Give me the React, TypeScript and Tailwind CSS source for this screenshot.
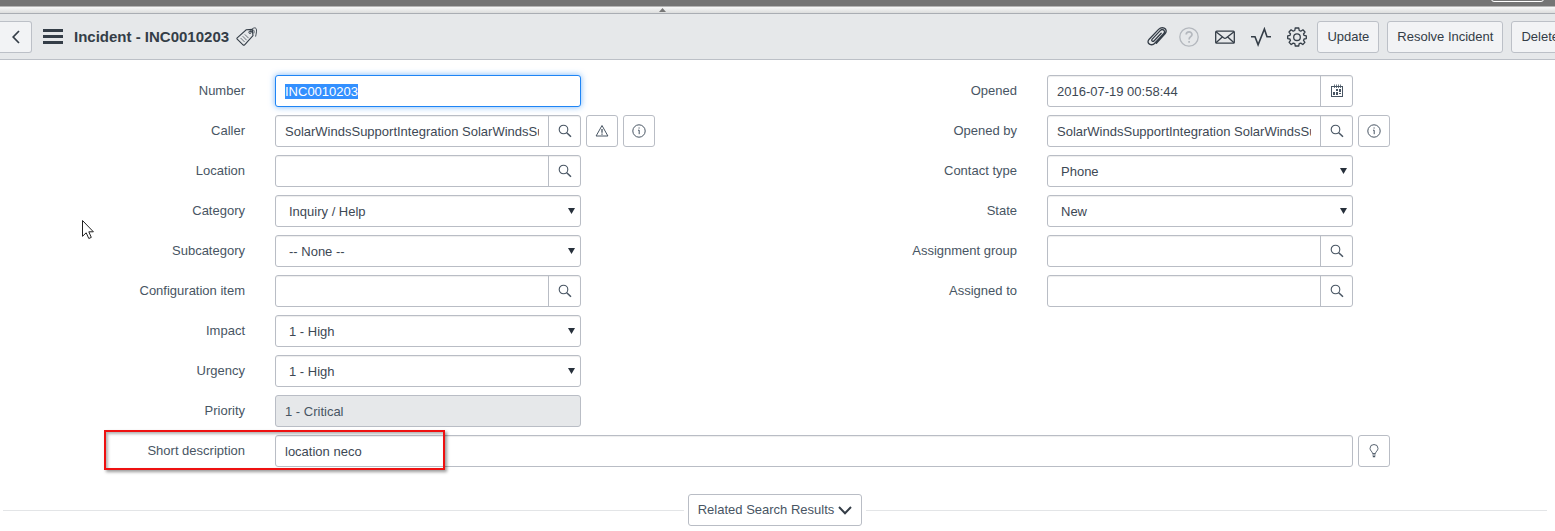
import { useEffect, useRef, type ReactNode } from "react";

const FIELD =
  "h-8 w-full min-w-0 border border-[#b9bdc5] bg-white px-[9px] pt-px text-[13px] text-[#3d4854] shadow-[inset_0_1px_1px_rgba(0,0,0,0.07)] outline-none";
const ICON_BUTTON =
  "flex h-8 w-8 shrink-0 items-center justify-center rounded-[3px] border border-[#b9bdc5] bg-white text-[#485563]";
const HEADER_BUTTON =
  "h-8 shrink-0 whitespace-nowrap rounded-[3px] border border-[#bcc0c7] bg-[#f2f3f5] px-[9px] text-[#343d47]";

function SearchIcon() {
  return (
    <svg width="14" height="14" viewBox="0 0 14 14" fill="none" stroke="currentColor">
      <circle cx="5.5" cy="5.5" r="4.3" strokeWidth="1.1" />
      <path d="M8.7 8.7 L13 12.8" strokeWidth="1.5" />
    </svg>
  );
}

function InfoIcon() {
  return (
    <svg width="14" height="14" viewBox="0 0 14 14" fill="none" stroke="currentColor">
      <circle cx="7" cy="7" r="6.2" />
      <path d="M6 6.2 H7.2 V10.2" />
      <path d="M6.5 4 H7.7" />
    </svg>
  );
}

function WarningIcon() {
  return (
    <svg width="14" height="14" viewBox="0 0 14 14" fill="none" stroke="currentColor">
      <path d="M7 1.5 L12.9 12 H1.1 Z" strokeLinejoin="round" />
      <path d="M7 5 V8.7 M7 9.6 V10.8" strokeWidth="1.3" />
    </svg>
  );
}

function CalendarIcon() {
  return (
    <svg width="14" height="14" viewBox="0 0 14 14" fill="none" stroke="currentColor">
      <rect x="1.5" y="2.5" width="11" height="10" />
      <path d="M4.5 .5 V4 M6.5 .5 V4 M8.5 .5 V4 M10.5 .5 V4" strokeWidth=".8" />
      <g fill="currentColor" stroke="none">
        <rect x="6" y="5" width="2" height="2" />
        <rect x="9" y="5" width="2" height="3" />
        <rect x="3" y="8" width="2" height="3" />
        <rect x="6" y="8" width="2" height="3" />
        <rect x="9" y="9" width="2" height="1" />
      </g>
    </svg>
  );
}

function BulbIcon() {
  return (
    <svg width="10" height="14" viewBox="0 0 10 14" fill="none" stroke="currentColor">
      <path d="M3.5 9.5 C3.5 7.5 1 6.8 1 4.4 A4 3.9 0 0 1 9 4.4 C9 6.8 6.5 7.5 6.5 9.5 Z" strokeWidth=".9" />
      <path d="M3.4 11 H6.6 M3.8 12.6 H6.2" strokeWidth="1.2" />
    </svg>
  );
}

function TagIcon() {
  return (
    <svg width="22" height="20" viewBox="0 0 22 20" fill="none" stroke="#343d47" strokeWidth="1.1">
      <path d="M1.2 10.8 L10.2 2.8 L16.2 2.4 L17 8.6 L8.6 17.8 Q7.8 18.6 7 17.8 L1.2 12.2 Q.6 11.5 1.2 10.8 Z" />
      <path d="M4.6 11 L8.6 15 M6.7 9.2 L10.6 13.2 M8.8 7.4 L12.6 11.2" strokeWidth=".7" />
      <circle cx="14" cy="5.3" r="1.2" strokeWidth=".9" />
      <path d="M14 5.3 C15 2 18.6 -.2 20 1.4 C21.2 3 20.2 6.4 19.6 9.6 M15 5 C17 1.8 18.8 2.8 17.8 6.4" strokeWidth=".9" />
    </svg>
  );
}

function PaperclipIcon() {
  return (
    <svg width="22" height="20" viewBox="0 0 22 20" fill="none" stroke="#343d47" strokeWidth="1.3" strokeLinecap="round">
      <path d="M15.2 6.2 L8.2 13.8 C6.8 15.3 4.8 13.6 6.2 12.1 L14.2 3.6 C16.8 1 20 4 17.6 6.7 L9 16 C5.8 19.6 -.6 16.6 3.2 12.2 L12.6 2.4 C16.4 -1.4 22.6 2.2 19.2 6.6 L10.4 16.2" />
    </svg>
  );
}

function HelpIcon() {
  return (
    <svg width="20" height="20" viewBox="0 0 20 20" fill="none" stroke="#b4b8be" strokeWidth="1.3">
      <circle cx="10" cy="10" r="9.2" />
      <path d="M7.2 7.6 C7.2 4 13 4.1 13 7.5 C13 9.7 10.1 9.8 10.1 12.4 M10.1 14 V15.8" strokeWidth="1.7" />
    </svg>
  );
}

function MailIcon() {
  return (
    <svg width="20" height="20" viewBox="0 0 20 20" fill="none" stroke="#343d47" strokeWidth="1.3">
      <rect x=".7" y="4.2" width="18.6" height="12" rx="1" />
      <path d="M1 4.7 L8.6 10.8 Q10 11.8 11.4 10.8 L19 4.7 M1 15.7 L7.3 9.9 M19 15.7 L12.7 9.9" />
    </svg>
  );
}

function PulseIcon() {
  return (
    <svg width="20" height="20" viewBox="0 0 20 20" fill="none" stroke="#343d47" strokeWidth="1.6">
      <path d="M0 9.8 H4 L7.1 17.8 L13.4 2 L16 9.8 H20" />
    </svg>
  );
}

function GearIcon() {
  return (
    <svg width="20" height="20" viewBox="0 0 20 20" fill="none" stroke="#343d47" strokeWidth="1.3" strokeLinejoin="round">
      <path d="M8.2 1 H11.8 L12.2 3.5 L13.8 4.2 L15.9 2.8 L18 5 L16.5 7 L17.1 8.4 L19.3 8.8 V11.6 L17.1 12 L16.5 13.4 L17.9 15.4 L15.8 17.5 L13.8 16.1 L12.2 16.7 L11.7 19 H8.3 L7.8 16.7 L6.2 16.1 L4.2 17.5 L2.1 15.4 L3.5 13.4 L2.9 12 L.7 11.6 V8.8 L2.9 8.4 L3.5 7 L2 5 L4.1 2.8 L6.2 4.2 L7.8 3.5 Z" />
      <circle cx="10" cy="10.2" r="3.3" />
    </svg>
  );
}

interface RowProps {
  id: string;
  label: string;
  children: ReactNode;
  extra?: ReactNode;
}

function Row({ id, label, children, extra }: RowProps) {
  return (
    <div className="grid grid-cols-[272fr_306fr_194fr]">
      <label htmlFor={id} className="pr-[30px] pt-[7px] text-right">
        {label}
      </label>
      <div className="flex min-w-0">{children}</div>
      <div className="flex gap-[5px] pl-[5px]">{extra}</div>
    </div>
  );
}

interface LookupProps {
  id: string;
  label: string;
  value?: string;
  action?: string;
  icon?: ReactNode;
  extra?: ReactNode;
}

function LookupRow({ id, label, value = "", action = "Look up", icon = <SearchIcon />, extra }: LookupProps) {
  return (
    <Row id={id} label={label} extra={extra}>
      <div className="flex h-8 w-full rounded-[3px] border border-[#b9bdc5] shadow-[inset_0_1px_1px_rgba(0,0,0,0.07)]">
        <div className="flex min-w-0 flex-1 px-[9px]">
          <input id={id} defaultValue={value} className="w-full min-w-0 bg-transparent pt-px text-[13px] text-[#3d4854] outline-none" />
        </div>
        <button
          type="button"
          aria-label={`${action} ${label}`}
          className="flex w-8 shrink-0 items-center justify-center border-l border-[#b9bdc5] text-[#485563]"
        >
          {icon}
        </button>
      </div>
    </Row>
  );
}

function SelectRow({ id, label, value }: { id: string; label: string; value: string }) {
  return (
    <Row id={id} label={label}>
      <div className="relative w-full">
        <select id={id} className={`${FIELD} appearance-none rounded-[3px] pl-[13px]`}>
          <option>{value}</option>
        </select>
        <svg className="pointer-events-none absolute right-[6px] top-[13px] text-[#27303b]" width="7" height="6" viewBox="0 0 7 6">
          <path d="M0 0 H7 L3.5 6 Z" fill="currentColor" />
        </svg>
      </div>
    </Row>
  );
}

export default function App() {
  const numberRef = useRef<HTMLInputElement>(null);

  useEffect(() => {
    numberRef.current?.focus();
    numberRef.current?.select();
  }, []);

  return (
    <div className="relative min-h-screen overflow-hidden bg-white font-['Liberation_Sans',Arial,sans-serif] text-[13px] leading-[18px] text-[#485563]">
      <div className="flex h-[6px] justify-end overflow-hidden bg-[#757575] pr-[11px]">
        <div className="-mt-2 h-[10px] w-[53px] rounded-[3px] border border-white" />
      </div>
      <div className="flex h-2 items-center justify-center border-b border-t border-b-[#a9adb3] border-t-[#b5b5b5] bg-gradient-to-b from-[#f8f8f8] to-[#dcdddd] pr-[231px]">
        <svg width="7" height="4" viewBox="0 0 7 4">
          <path d="M0 4 L3.5 0 L7 4 Z" fill="#777" />
        </svg>
      </div>

      <header className="flex h-[46px] items-center overflow-hidden border-b border-[#bcc0c7] bg-[#e6e8ea]">
        <button type="button" aria-label="Back" className="flex h-8 w-8 shrink-0 items-center justify-center rounded-r-[3px] border border-l-0 border-[#bcc0c7] bg-[#f2f3f5]">
          <svg width="8" height="14" viewBox="0 0 8 14" fill="none" stroke="#343d47" strokeWidth="1.7">
            <path d="M7 1 L1.2 7 L7 13" />
          </svg>
        </button>
        <button type="button" aria-label="Form menu" className="ml-[11px] shrink-0">
          <svg width="20" height="15" viewBox="0 0 20 15" stroke="#343d47" strokeWidth="3">
            <path d="M0 1.5 H20 M0 7.5 H20 M0 13.5 H20" />
          </svg>
        </button>
        <h1 className="ml-[11px] whitespace-nowrap text-[15px] font-bold text-[#343d47]">Incident - INC0010203</h1>
        <button type="button" aria-label="Tags" className="ml-[7px]">
          <TagIcon />
        </button>

        <div className="-mr-[14px] ml-auto flex shrink-0 items-center">
          <div className="mr-[10px] flex items-center gap-[16px]">
            <div className="flex gap-[11px]">
              <button type="button" aria-label="Attachments">
                <PaperclipIcon />
              </button>
              <button type="button" aria-label="Help">
                <HelpIcon />
              </button>
            </div>
            <button type="button" aria-label="Email">
              <MailIcon />
            </button>
            <button type="button" aria-label="Activity">
              <PulseIcon />
            </button>
            <button type="button" aria-label="Settings">
              <GearIcon />
            </button>
          </div>
          <div className="flex gap-2">
            <button type="button" className={HEADER_BUTTON}>Update</button>
            <button type="button" className={HEADER_BUTTON}>Resolve Incident</button>
            <button type="button" className={HEADER_BUTTON}>Delete</button>
          </div>
        </div>
      </header>

      <form className="pl-[3px] pr-2 pt-[15px]">
        <div className="grid grid-cols-2">
          <div className="flex flex-col gap-2">
            <Row id="number" label="Number">
              <input
                id="number"
                ref={numberRef}
                defaultValue="INC0010203"
                className="h-8 w-full rounded-[3px] border border-[#1f85f5] bg-white px-[9px] text-[#3d4854] shadow-[0_0_6px_rgba(31,133,245,0.6)] outline-none selection:bg-[#3390ff] selection:text-white"
              />
            </Row>
            <LookupRow
              id="caller"
              label="Caller"
              value="SolarWindsSupportIntegration SolarWindsSupportIntegration"
              extra={
                <>
                  <button type="button" aria-label="Caller incidents" className={ICON_BUTTON}>
                    <WarningIcon />
                  </button>
                  <button type="button" aria-label="Caller details" className={ICON_BUTTON}>
                    <InfoIcon />
                  </button>
                </>
              }
            />
            <LookupRow id="location" label="Location" />
            <SelectRow id="category" label="Category" value="Inquiry / Help" />
            <SelectRow id="subcategory" label="Subcategory" value="-- None --" />
            <LookupRow id="ci" label="Configuration item" />
            <SelectRow id="impact" label="Impact" value="1 - High" />
            <SelectRow id="urgency" label="Urgency" value="1 - High" />
            <Row id="priority" label="Priority">
              <input
                id="priority"
                readOnly
                value="1 - Critical"
                className="h-8 w-full rounded-[3px] border border-[#b9bdc5] bg-[#e6e8ea] px-[9px] text-[#485563] outline-none"
              />
            </Row>
          </div>

          <div className="flex flex-col gap-2">
            <LookupRow id="opened" label="Opened" value="2016-07-19 00:58:44" action="Pick date for" icon={<CalendarIcon />} />
            <LookupRow
              id="opened-by"
              label="Opened by"
              value="SolarWindsSupportIntegration SolarWindsSupportIntegration"
              extra={
                <button type="button" aria-label="Opened by details" className={ICON_BUTTON}>
                  <InfoIcon />
                </button>
              }
            />
            <SelectRow id="contact-type" label="Contact type" value="Phone" />
            <SelectRow id="state" label="State" value="New" />
            <LookupRow id="assignment-group" label="Assignment group" />
            <LookupRow id="assigned-to" label="Assigned to" />
          </div>
        </div>

        <div className="relative mt-2 grid grid-cols-[272fr_1078fr_194fr]">
          <label htmlFor="short-description" className="pr-[30px] pt-[7px] text-right">
            Short description
          </label>
          <input id="short-description" defaultValue="location neco" className={`${FIELD} rounded-[3px]`} />
          <div className="pl-[5px]">
            <button type="button" aria-label="Suggestions" className={ICON_BUTTON}>
              <BulbIcon />
            </button>
          </div>
          <div className="pointer-events-none absolute -top-[5px] left-[101px] h-10 w-[341px] border-2 border-[#ee1111] shadow-[2px_2px_3px_rgba(0,0,0,0.4),inset_2px_2px_3px_rgba(0,0,0,0.3)]" />
        </div>

        <div className="mt-[27px] flex items-center gap-1">
          <div className="h-px flex-1 bg-[#e3e5e7]" />
          <button type="button" className="flex h-8 items-center gap-1 rounded-[3px] border border-[#b9bdc5] bg-white px-[9px] text-[#485563]">
            Related Search Results
            <svg width="14" height="9" viewBox="0 0 14 9" fill="none" stroke="#343d47" strokeWidth="2">
              <path d="M1 1 L7 7.2 L13 1" />
            </svg>
          </button>
          <div className="h-px flex-1 bg-[#e3e5e7]" />
        </div>
      </form>

      <svg className="pointer-events-none absolute left-[82px] top-[220px]" width="12" height="20" viewBox="0 0 12 20">
        <path d="M.5 .5 V16.3 L4.2 12.8 L6.8 18.5 L9.3 17.4 L6.8 11.8 H11.4 Z" fill="#fff" stroke="#222" />
      </svg>
    </div>
  );
}
